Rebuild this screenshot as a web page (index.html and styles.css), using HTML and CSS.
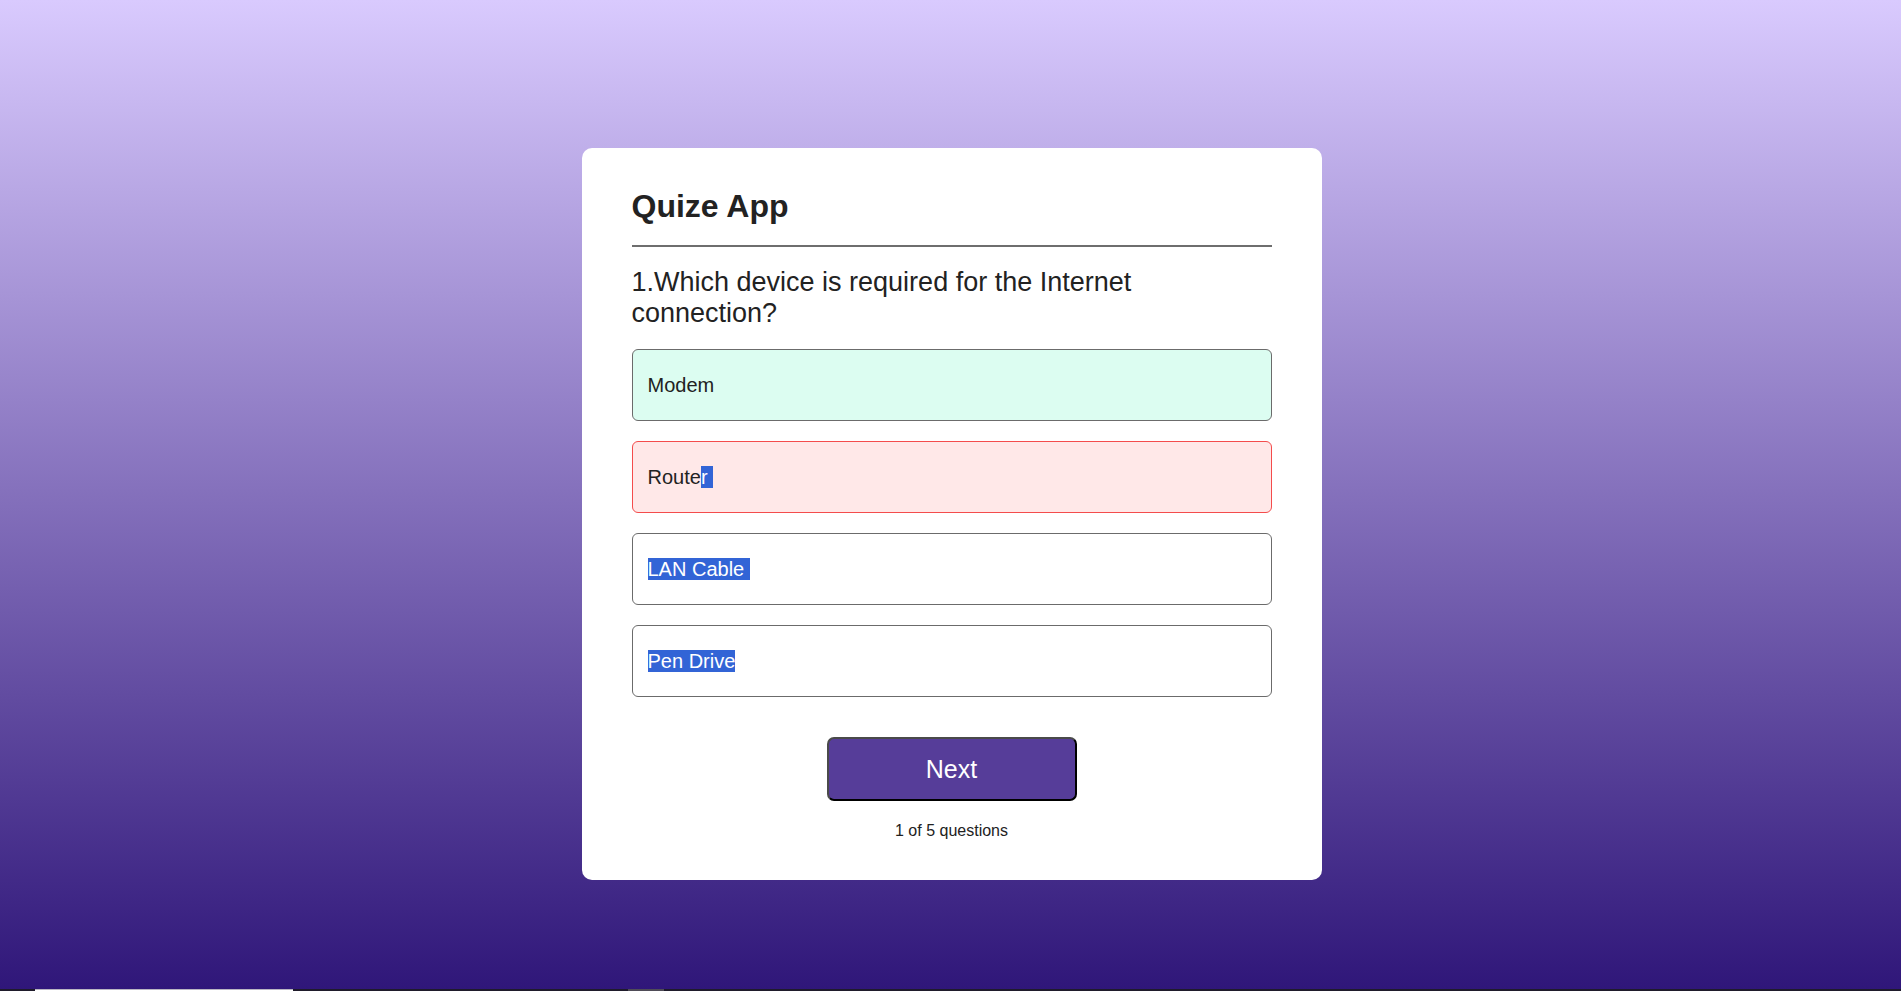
FILE: index.html
```html
<!DOCTYPE html>
<html lang="en">
<head>
<meta charset="utf-8">
<title>Quize App</title>
<link rel="stylesheet" href="styles.css">
</head>
<body>
<main class="app">
  <h1 class="title">Quize App</h1>
  <div class="quiz">
    <h2 class="question">1.Which device is required for the Internet connection?</h2>
    <div class="answers">
      <button class="answer correct">Modem</button>
      <button class="answer incorrect">Route<span class="sel">r&nbsp;</span></button>
      <button class="answer"><span class="sel">LAN Cable&nbsp;</span></button>
      <button class="answer"><span class="sel">Pen Drive</span></button>
    </div>
    <button class="next">Next</button>
    <p class="count">1 of 5 questions</p>
  </div>
</main>
<div class="strip">
  <span class="strip-light"></span>
  <span class="strip-grey"></span>
</div>
</body>
</html>
```
FILE: styles.css
```css
* {
  box-sizing: border-box;
}

html, body {
  margin: 0;
  padding: 0;
}

body {
  height: 100vh;
  overflow: hidden;
  background: linear-gradient(to bottom, #d9cafe 0%, #2f1679 100%);
  font-family: "Liberation Sans", Arial, sans-serif;
  color: #222;
  padding-top: 148px;
}

.app {
  width: 740px;
  margin: 0 auto;
  transform: translateX(1px);
  background: #fff;
  border-radius: 10px;
  padding: 40px 50px 40px;
}

.title {
  margin: 0;
  font-size: 32px;
  font-weight: 700;
  line-height: 37px;
  color: #222;
  padding-bottom: 20px;
  border-bottom: 2px solid #6e6e6e;
}

.quiz {
  display: flex;
  flex-direction: column;
  align-items: center;
}

.question {
  align-self: stretch;
  margin: 20px 0 20px;
  font-size: 27px;
  font-weight: 400;
  line-height: 31px;
  color: #222;
}

.answers {
  align-self: stretch;
  display: flex;
  flex-direction: column;
  gap: 20px;
}

.answer {
  display: block;
  width: 100%;
  text-align: left;
  font-family: "Liberation Sans", Arial, sans-serif;
  font-size: 20px;
  line-height: 23px;
  color: #222;
  background: #fff;
  border: 1px solid #6b6b6b;
  border-radius: 6px;
  padding: 23.5px 15px;
  margin: 0;
}

.answer.correct {
  background: #dcfdf1;
  border-color: #6b6b6b;
}

.answer.incorrect {
  background: #ffe8e8;
  border-color: #f44c4c;
}

.sel {
  background: #3264d6;
  color: #fff;
}

.next {
  margin-top: 40px;
  width: 250px;
  height: 64px;
  background: #563d99;
  color: #fff;
  font-family: "Liberation Sans", Arial, sans-serif;
  font-size: 25px;
  border: 2px solid;
  border-color: #4a4a4a #000 #000 #4a4a4a;
  border-radius: 7px;
  padding: 0;
}

.count {
  margin: 21px 0 0;
  font-size: 16px;
  line-height: 18px;
  color: #222;
}

.strip {
  position: fixed;
  left: 0;
  right: 0;
  bottom: 0;
  height: 2px;
  background: #1f1b2b;
}

.strip-light {
  position: absolute;
  left: 35px;
  width: 258px;
  top: 0;
  height: 2px;
  background: #fff;
  border-top: 1px solid #b9b6c2;
}

.strip-grey {
  position: absolute;
  left: 628px;
  width: 36px;
  top: 0;
  height: 2px;
  background: #4f4c57;
}
```
